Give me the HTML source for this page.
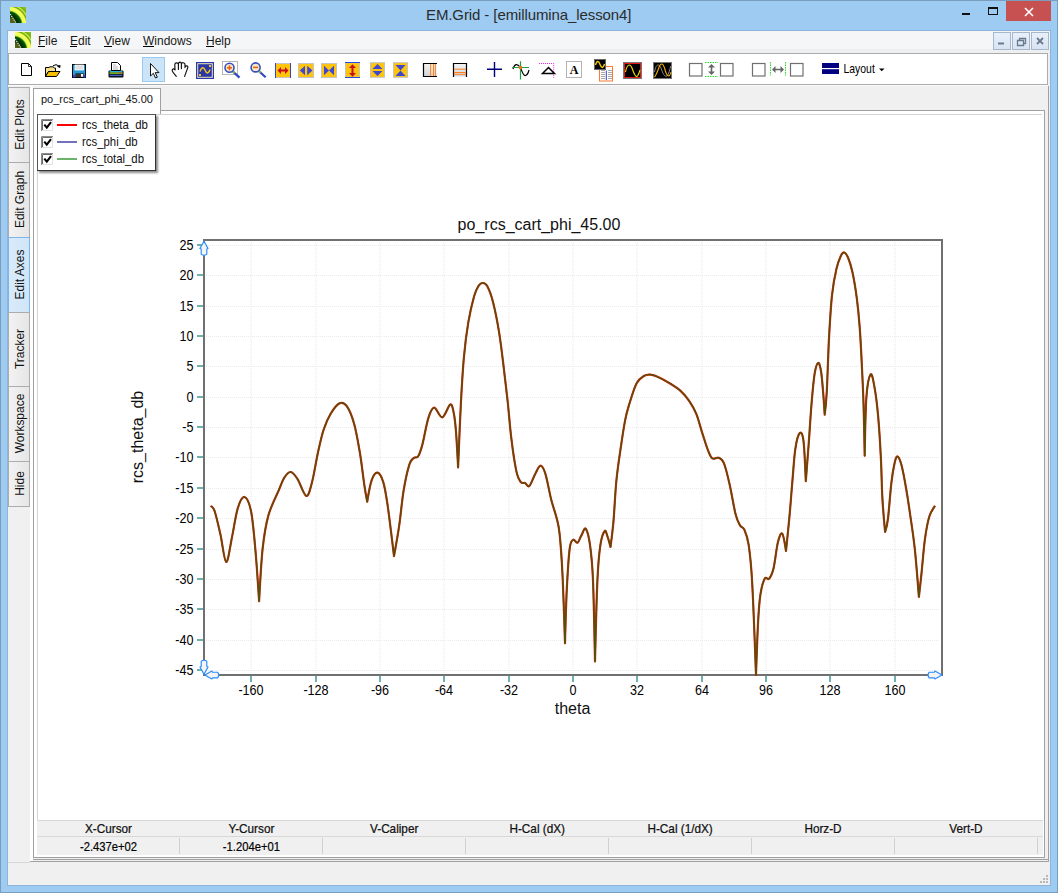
<!DOCTYPE html>
<html><head><meta charset="utf-8"><style>
*{margin:0;padding:0;box-sizing:border-box}
html,body{width:1058px;height:893px;overflow:hidden}
body{position:relative;background:#9ECBF2;font-family:"Liberation Sans",sans-serif;color:#000}
.a{position:absolute}
.t{position:absolute;white-space:nowrap;line-height:1}
u{text-decoration:none;border-bottom:1px solid #000;}
</style></head><body>
<div class="a" style="left:0;top:0;width:1058px;height:893px;border:1px solid #7A9CBD"></div>
<svg class="a" style="left:10px;top:7px" width="16" height="16" viewBox="0 0 16 16">
<defs><radialGradient id="lg1" cx="-2" cy="18" r="24" gradientUnits="userSpaceOnUse"><stop offset="0" stop-color="#6a6a28"/><stop offset="0.3" stop-color="#4a6010"/><stop offset="0.4" stop-color="#002800"/><stop offset="0.55" stop-color="#005a00"/><stop offset="0.62" stop-color="#e8ff50"/><stop offset="0.74" stop-color="#ffff60"/><stop offset="0.8" stop-color="#60a810"/><stop offset="0.86" stop-color="#d8f048"/><stop offset="0.9" stop-color="#78b010"/><stop offset="1" stop-color="#88c020"/></radialGradient></defs>
<rect width="16" height="16" fill="url(#lg1)"/>
<path d="M0.3,7 L5.8,15.8" stroke="#f0f0f0" stroke-width="1.1" stroke-dasharray="1.3,0.9"/>
</svg>
<div class="t" style="left:426px;top:7px;font-size:15px;color:#2b2b2b;letter-spacing:-0.1px">EM.Grid - [emillumina_lesson4]</div>
<div class="a" style="left:962px;top:13px;width:8px;height:2px;background:#111"></div>
<div class="a" style="left:988px;top:7px;width:10px;height:8px;border:1px solid #111;border-top-width:2px"></div>
<div class="a" style="left:1006px;top:1px;width:45px;height:20px;background:#C75050"></div>
<svg class="a" style="left:1024px;top:7px" width="10" height="10" viewBox="0 0 10 10"><path d="M1,1 L9,9 M9,1 L1,9" stroke="#fff" stroke-width="1.6"/></svg>

<div class="a" style="left:7px;top:30px;width:1044px;height:856px;border:1px solid #8DB4DA;background:#F0F0F0"></div>
<div class="a" style="left:8px;top:31px;width:1042px;height:18px;background:#F5F6F7"></div>
<div class="a" style="left:8px;top:49px;width:1042px;height:4px;background:#EEEFF1"></div>
<svg class="a" style="left:15px;top:32px" width="16" height="16" viewBox="0 0 16 16">
<defs><radialGradient id="lg2" cx="-2" cy="18" r="24" gradientUnits="userSpaceOnUse"><stop offset="0" stop-color="#6a6a28"/><stop offset="0.3" stop-color="#4a6010"/><stop offset="0.4" stop-color="#002800"/><stop offset="0.55" stop-color="#005a00"/><stop offset="0.62" stop-color="#e8ff50"/><stop offset="0.74" stop-color="#ffff60"/><stop offset="0.8" stop-color="#60a810"/><stop offset="0.86" stop-color="#d8f048"/><stop offset="0.9" stop-color="#78b010"/><stop offset="1" stop-color="#88c020"/></radialGradient></defs>
<rect width="16" height="16" fill="url(#lg2)"/>
<path d="M0.3,7 L5.8,15.8" stroke="#f0f0f0" stroke-width="1.1" stroke-dasharray="1.3,0.9"/>
</svg>
<div class="t" style="left:38px;top:35px;font-size:12px;color:#1a1a1a">File</div>
<div class="t" style="left:70px;top:35px;font-size:12px;color:#1a1a1a">Edit</div>
<div class="t" style="left:104px;top:35px;font-size:12px;color:#1a1a1a">View</div>
<div class="t" style="left:143px;top:35px;font-size:12px;color:#1a1a1a">Windows</div>
<div class="t" style="left:206px;top:35px;font-size:12px;color:#1a1a1a">Help</div>
<div class="a" style="left:38px;top:46px;width:7px;height:1px;background:#000"></div>
<div class="a" style="left:70px;top:46px;width:7px;height:1px;background:#000"></div>
<div class="a" style="left:104px;top:46px;width:8px;height:1px;background:#000"></div>
<div class="a" style="left:143px;top:46px;width:11px;height:1px;background:#000"></div>
<div class="a" style="left:206px;top:46px;width:8px;height:1px;background:#000"></div>
<div class="a" style="left:993px;top:32px;width:18px;height:18px;border:1px solid #A6B6CC;background:linear-gradient(#E8F0FA,#D8E4F2)"></div>
<div class="a" style="left:1012px;top:32px;width:18px;height:18px;border:1px solid #A6B6CC;background:linear-gradient(#E8F0FA,#D8E4F2)"></div>
<div class="a" style="left:1031px;top:32px;width:18px;height:18px;border:1px solid #A6B6CC;background:linear-gradient(#E8F0FA,#D8E4F2)"></div>
<svg class="a" style="left:990px;top:30px" width="62" height="22">
<rect x="8" y="12.5" width="6" height="2" fill="#6A7A8E"/>
<path d="M27.5,10.5 H33.5 V15.5 H27.5 Z M29.5,10.5 V8.5 H35.5 V13.5 H33.5" fill="none" stroke="#6A7A8E" stroke-width="1.3"/>
<path d="M47,8 L53,14 M53,8 L47,14" stroke="#6A7A8E" stroke-width="1.8"/>
</svg>

<div class="a" style="left:8px;top:53px;width:1040px;height:32px;border:1px solid #ABABAB;background:#fff"></div>
<div class="a" style="left:8px;top:85px;width:1040px;height:1px;background:#FAFAFA"></div>
<div class="a" style="left:142px;top:57px;width:23px;height:25px;border:1px solid #99C9EF;background:#CCE4F7"></div>
<svg class="a" style="left:0;top:0;font-family:'Liberation Sans'" width="1058" height="90"><path d="M21.5,63.5 H28.5 L31.5,66.5 V75.5 H21.5 Z" fill="#fff" stroke="#000" stroke-width="1"/><path d="M28.5,63.5 V66.5 H31.5" fill="none" stroke="#000" stroke-width="0.8"/>
<path d="M45.5,67.5 H49 L50,66.8 H53 L54.5,68 H55.5 V71.5 L48.5,71.5 L45.5,76.5 Z" fill="#F7E08A" stroke="#000" stroke-width="1"/>
<path d="M45.5,76.5 L48.5,71.5 H60 L56.5,76.5 Z" fill="#F5C000" stroke="#000" stroke-width="1"/>
<path d="M53,65.8 Q56,63.5 59,66" fill="none" stroke="#000" stroke-width="1"/><path d="M57.5,66.5 L60,67.5 L60,65" fill="#000" stroke="#000" stroke-width="0.8"/>
<rect x="72.5" y="64.5" width="13" height="13" fill="#1F9BDA" stroke="#000" stroke-width="1"/>
<rect x="75" y="65" width="8.5" height="5" fill="#E0E0E0" stroke="#fff" stroke-width="0.8"/>
<rect x="75.3" y="73.2" width="8.4" height="4" fill="#333"/><rect x="81" y="74" width="2" height="2.7" fill="#fff"/>
<rect x="73" y="75" width="2" height="2.5" fill="#4040C0"/><rect x="83.7" y="75" width="1.8" height="2.5" fill="#4040C0"/>
<path d="M111.5,62.5 H117.5 L120.5,65.5 V70.5 H111.5 Z" fill="#fff" stroke="#000" stroke-width="1"/><path d="M113,65 H116 M113,67 H118 M113,69 H118" stroke="#999" stroke-width="0.7"/>
<rect x="108.5" y="70.5" width="15" height="7" rx="1" fill="#000"/><rect x="109.5" y="71" width="13" height="1.4" fill="#20B0E0"/><rect x="109.5" y="72.4" width="13" height="1.4" fill="#9AD020"/><rect x="119" y="72.2" width="2" height="1.2" fill="#F03030"/><rect x="109.5" y="74.6" width="13" height="1.6" fill="#4060C0"/>
<path d="M150.5,63.5 L150.5,76 L153.3,73.3 L155.5,78 L157.3,77.2 L155.2,72.6 L159,72.6 Z" fill="#fff" stroke="#111" stroke-width="1" stroke-linejoin="round"/>
<path d="M176.3,76.4 C175,74.5 172.6,72.5 172.2,70.6 C172,69 173.6,67.9 175,70 L174.8,64.6 C174.8,62.4 178.4,62.2 178.4,64.6 L178.4,69.4 M178.4,64.6 C178.4,61.5 181.4,61.5 181.4,63.9 L181.4,68.6 M181.4,63.9 C181.6,62.2 185,62.2 185,64.6 L185,67.6 M185,67 C185.6,65.3 188.2,65.6 187.8,67.6 L184.6,76.4" fill="none" stroke="#111" stroke-width="1.15" stroke-linecap="round" stroke-linejoin="round"/>
<rect x="196.5" y="62.5" width="17" height="16" fill="#2B37A6" stroke="#2A3AB0" stroke-width="1"/><rect x="197.7" y="63.7" width="14.6" height="13.6" fill="none" stroke="#F2E4B0" stroke-width="1"/>
<path d="M200,71.5 C201.5,67 203.5,66.5 205,70 C206.5,74 208.5,74 210,69.5" fill="none" stroke="#F5C820" stroke-width="1.4"/><rect x="209" y="65" width="2" height="2" fill="#F5C820"/><rect x="199" y="74" width="2" height="2" fill="#F5C820"/>
<rect x="222.5" y="61.5" width="15" height="13" fill="none" stroke="#B8B8B8" stroke-width="1"/>
<path d="M233.0,71.6 L239.5,77.6" stroke="#3346C0" stroke-width="2.2"/><path d="M233.0,71.6 L234.5,73.0" stroke="#8AC040" stroke-width="2.2"/>
<circle cx="229.5" cy="67.8" r="4.5" fill="#F3EAC0" stroke="#3A4CC8" stroke-width="1.6"/>
<path d="M227.0,67.8 H232.0" stroke="#F05A10" stroke-width="1.5"/>
<path d="M229.5,65.3 V70.3" stroke="#F05A10" stroke-width="1.5"/>
<path d="M259.1,71.2 L265.6,77.2" stroke="#3346C0" stroke-width="2.2"/><path d="M259.1,71.2 L260.6,72.60000000000001" stroke="#8AC040" stroke-width="2.2"/>
<circle cx="255.6" cy="67.4" r="4.5" fill="#F3EAC0" stroke="#3A4CC8" stroke-width="1.6"/>
<path d="M253.1,67.4 H258.1" stroke="#F05A10" stroke-width="1.5"/>
<rect x="275.5" y="63.5" width="15" height="14" fill="#FFC40C" stroke="#C4C4C4" stroke-width="1"/><path d="M275.5,63 V78 M290.5,63 V78" stroke="#2F45E0" stroke-width="1"/>
<path d="M277.5,70.5 L281,67 V69.5 H285 V67 L288.5,70.5 L285,74 V71.5 H281 V74 Z" fill="#C8101E"/>
<rect x="298.5" y="63.5" width="15" height="14" fill="#FFC40C" stroke="#C4C4C4" stroke-width="1"/><path d="M299.8,70.5 L305,65.7 V75.3 Z M312.5,70.5 L307.2,65.7 V75.3 Z" fill="#3F48D0"/>
<rect x="321.5" y="63.5" width="15" height="14" fill="#FFC40C" stroke="#C4C4C4" stroke-width="1"/><path d="M324,65.7 L329,70.5 L324,75.3 Z M334,65.7 L329,70.5 L334,75.3 Z" fill="#3F48D0"/>
<rect x="345.5" y="62.7" width="14" height="14.6" fill="#FFC40C" stroke="#C4C4C4" stroke-width="1"/><path d="M345,62.5 H360 M345,77.5 H360" stroke="#2F45E0" stroke-width="1"/>
<path d="M352.5,64.2 L356,68 H353.5 V73 H356 L352.5,76.8 L349,73 H351.5 V68 H349 Z" fill="#C8101E"/>
<rect x="370.5" y="62.7" width="14" height="14.6" fill="#FFC40C" stroke="#C4C4C4" stroke-width="1"/><path d="M377.5,64 L382.5,69 H372.5 Z M377.5,76 L382.5,71 H372.5 Z" fill="#3F48D0"/>
<rect x="393.5" y="62.7" width="14" height="14.6" fill="#FFC40C" stroke="#C4C4C4" stroke-width="1"/><path d="M395.5,65 H405.5 L400.5,70.5 Z M395.5,76 H405.5 L400.5,70.5 Z" fill="#3F48D0"/>
<defs><linearGradient id="gg" x1="0" y1="0" x2="0" y2="1"><stop offset="0" stop-color="#F4F4F4"/><stop offset="1" stop-color="#D4D4D4"/></linearGradient></defs>
<rect x="423.5" y="63.5" width="13" height="13" fill="url(#gg)"/><path d="M437,63.5 H423.5 V76.5 H437" fill="none" stroke="#000" stroke-width="1.2"/><path d="M430.6,64 V76 M433.5,64 V76 M435.4,64 V76" stroke="#FF8020" stroke-width="1"/>
<rect x="453.5" y="63.5" width="13" height="13" fill="url(#gg)"/><path d="M453.5,77 V63.5 H466.5 V77" fill="none" stroke="#000" stroke-width="1.2"/><path d="M454,69.2 H466 M454,72.5 H466 M454,74.3 H466" stroke="#FF8020" stroke-width="1"/>
<path d="M494.5,62 V77 M487,69.3 H502" stroke="#00007A" stroke-width="1.4"/>
<path d="M513,69 C514.5,64 517,63 520.5,67.5 C522,72 523.5,76 525.5,75.5 C527.5,75 528.5,72 529,70" fill="none" stroke="#000" stroke-width="1.2"/>
<path d="M520.5,61.3 V79.6 M512.2,67.5 H529" stroke="#20A040" stroke-width="1.2"/><rect x="519" y="66" width="3" height="3" fill="#F07020"/>
<path d="M539,63.5 H553.7 V78" fill="none" stroke="#F020F0" stroke-width="1" stroke-dasharray="1,1"/>
<path d="M542.5,73.5 H554.5 L548.5,67.5 Z" fill="none" stroke="#000" stroke-width="1.5"/>
<rect x="566.5" y="61.5" width="15" height="16" fill="#fff" stroke="#B4B4B4" stroke-width="1"/>
<text x="574" y="74" text-anchor="middle" font-family="Liberation Serif" font-weight="bold" font-size="12">A</text>
<rect x="599.5" y="66.5" width="13" height="14.5" fill="#fff" stroke="#FF7A30" stroke-width="1"/>
<path d="M601,70.5 H605 M601,72.5 H605 M601,74.5 H605 M601,76.5 H605 M601,78.5 H605 M608,70.5 H612 M608,72.5 H612 M608,74.5 H612 M608,76.5 H612 M608,78.5 H612" stroke="#A8A8A8" stroke-width="1"/><path d="M606.3,70.5 V80" stroke="#3040D0" stroke-width="1"/>
<rect x="594.5" y="59.5" width="11" height="10" fill="#000" stroke="#666" stroke-width="1"/>
<path d="M595.5,65 C597,60.5 598.5,60.5 600,64.5 C601.5,68.5 603,68.5 604.5,64" fill="none" stroke="#F5D000" stroke-width="1.4"/>
<rect x="623.5" y="62.5" width="18" height="16" fill="#000" stroke="#777" stroke-width="1"/><rect x="624.5" y="63.5" width="16" height="14" fill="none" stroke="#E01818" stroke-width="1"/>
<path d="M625.5,72 C627,64 630,63 632,68 C634,74 636,78 637.5,76 C639,74 639.5,72 640,70" fill="none" stroke="#F0E000" stroke-width="1.1"/>
<rect x="653.5" y="62.5" width="18" height="16" fill="#000" stroke="#777" stroke-width="1"/>
<path d="M654.5,72 C656,64 658.5,63 661,68 C663,74 664.5,77 667,76 C669,74.5 670,68 670.8,66" fill="none" stroke="#888" stroke-width="1"/>
<path d="M654.5,77 C656.5,75 658,70 659.5,66 C661,63 663,63 664.5,68 C666,74 667.5,77 669.5,75.5 C670.5,74 670.8,73 671,72" fill="none" stroke="#F0B000" stroke-width="1.1"/>
<rect x="689.5" y="63.5" width="12.5" height="12.5" fill="#fff" stroke="#707070" stroke-width="1.2"/>
<rect x="720.5" y="63.5" width="12.5" height="12.5" fill="#fff" stroke="#707070" stroke-width="1.2"/>
<rect x="752.5" y="63.5" width="12.5" height="12.5" fill="#fff" stroke="#707070" stroke-width="1.2"/>
<rect x="790.5" y="63.5" width="12.5" height="12.5" fill="#fff" stroke="#707070" stroke-width="1.2"/>
<path d="M705,62.5 H718 M705,76.5 H718" stroke="#20E020" stroke-width="1" stroke-dasharray="1.5,1"/>
<path d="M711.5,64 L715,67.5 H712.3 V71.5 H715 L711.5,75 L708,71.5 H710.7 V67.5 H708 Z" fill="#666"/>
<path d="M770.5,62 V75.5 M785.5,62 V75.5" stroke="#20E020" stroke-width="1" stroke-dasharray="1.5,1"/>
<path d="M772,69.5 L775.5,66 V68.7 H780.5 V66 L784,69.5 L780.5,73 V70.3 H775.5 V73 Z" fill="#666"/>
<rect x="822" y="63" width="17" height="11" fill="#000080"/><rect x="822" y="68" width="17" height="1.2" fill="#fff"/>
<text transform="translate(843.5,73.3) scale(0.87,1)" font-size="12" fill="#000">Layout</text>
<path d="M879,68.5 H884.5 L881.75,71.3 Z" fill="#000"/></svg>

<div class="a" style="left:8px;top:87px;width:22px;height:76px;border:1px solid #ACACAC;background:linear-gradient(to right,#F2F2F2,#E6E6E6)"></div>
<div class="a" style="left:8px;top:162px;width:22px;height:76px;border:1px solid #ACACAC;background:linear-gradient(to right,#F2F2F2,#E6E6E6)"></div>
<div class="a" style="left:8px;top:237px;width:22px;height:76px;border:1px solid #7EB4EA;background:linear-gradient(to right,#D9EBFA,#CFE5F8)"></div>
<div class="a" style="left:8px;top:312px;width:22px;height:75px;border:1px solid #ACACAC;background:linear-gradient(to right,#F2F2F2,#E6E6E6)"></div>
<div class="a" style="left:8px;top:386px;width:22px;height:76px;border:1px solid #ACACAC;background:linear-gradient(to right,#F2F2F2,#E6E6E6)"></div>
<div class="a" style="left:8px;top:461px;width:22px;height:46px;border:1px solid #ACACAC;background:linear-gradient(to right,#F2F2F2,#E6E6E6)"></div><svg class="a" style="left:0;top:0;font-family:'Liberation Sans'" width="40" height="520">
<text transform="translate(24.3,124.5) rotate(-90) scale(0.92,1)" text-anchor="middle" font-size="13" fill="#111">Edit Plots</text>
<text transform="translate(24.3,199.5) rotate(-90) scale(0.92,1)" text-anchor="middle" font-size="13" fill="#111">Edit Graph</text>
<text transform="translate(24.3,274.5) rotate(-90) scale(0.92,1)" text-anchor="middle" font-size="13" fill="#111">Edit Axes</text>
<text transform="translate(24.3,349.0) rotate(-90) scale(0.92,1)" text-anchor="middle" font-size="13" fill="#111">Tracker</text>
<text transform="translate(24.3,423.5) rotate(-90) scale(0.92,1)" text-anchor="middle" font-size="13" fill="#111">Workspace</text>
<text transform="translate(24.3,483.5) rotate(-90) scale(0.92,1)" text-anchor="middle" font-size="13" fill="#111">Hide</text>
</svg>

<div class="a" style="left:1048px;top:86px;width:1px;height:776px;background:#A0A0A0"></div>
<div class="a" style="left:30px;top:861px;width:1019px;height:1px;background:#A0A0A0"></div>
<div class="a" style="left:31px;top:859px;width:1017px;height:1px;background:#A0A0A0"></div>
<div class="a" style="left:8px;top:862px;width:22px;height:1px;background:#D8D8D8"></div>
<div class="a" style="left:30px;top:86px;width:3px;height:775px;background:#fff"></div>
<div class="a" style="left:33px;top:110px;width:1012px;height:748px;border:1px solid #A0A0A0;background:#fff"></div>
<div class="a" style="left:37px;top:114px;width:1005px;height:706px;border:1px solid #D4D4D4;border-right:none;border-bottom:none;background:#fff"></div>
<div class="a" style="left:161px;top:86px;width:887px;height:24px;background:#F0F0F0"></div>
<div class="a" style="left:33px;top:88px;width:128px;height:26px;border:1px solid #A0A0A0;border-bottom:none;background:#fff"></div>
<div class="t" style="left:41px;top:94px;font-size:11px;color:#111">po_rcs_cart_phi_45.00</div>

<svg class="a" style="left:0;top:0;font-family:'Liberation Sans'" width="1058" height="893" viewBox="0 0 1058 893"><line x1="251" y1="242" x2="251" y2="673" stroke="#EAEAEA" stroke-width="1.1" stroke-dasharray="1,1"/>
<line x1="316" y1="242" x2="316" y2="673" stroke="#EAEAEA" stroke-width="1.1" stroke-dasharray="1,1"/>
<line x1="380" y1="242" x2="380" y2="673" stroke="#EAEAEA" stroke-width="1.1" stroke-dasharray="1,1"/>
<line x1="444" y1="242" x2="444" y2="673" stroke="#EAEAEA" stroke-width="1.1" stroke-dasharray="1,1"/>
<line x1="509" y1="242" x2="509" y2="673" stroke="#EAEAEA" stroke-width="1.1" stroke-dasharray="1,1"/>
<line x1="573" y1="242" x2="573" y2="673" stroke="#EAEAEA" stroke-width="1.1" stroke-dasharray="1,1"/>
<line x1="637" y1="242" x2="637" y2="673" stroke="#EAEAEA" stroke-width="1.1" stroke-dasharray="1,1"/>
<line x1="702" y1="242" x2="702" y2="673" stroke="#EAEAEA" stroke-width="1.1" stroke-dasharray="1,1"/>
<line x1="766" y1="242" x2="766" y2="673" stroke="#EAEAEA" stroke-width="1.1" stroke-dasharray="1,1"/>
<line x1="830" y1="242" x2="830" y2="673" stroke="#EAEAEA" stroke-width="1.1" stroke-dasharray="1,1"/>
<line x1="895" y1="242" x2="895" y2="673" stroke="#EAEAEA" stroke-width="1.1" stroke-dasharray="1,1"/>
<line x1="206" y1="245.5" x2="940" y2="245.5" stroke="#EAEAEA" stroke-width="1.1" stroke-dasharray="1,1"/>
<line x1="206" y1="275.5" x2="940" y2="275.5" stroke="#EAEAEA" stroke-width="1.1" stroke-dasharray="1,1"/>
<line x1="206" y1="306.5" x2="940" y2="306.5" stroke="#EAEAEA" stroke-width="1.1" stroke-dasharray="1,1"/>
<line x1="206" y1="336.5" x2="940" y2="336.5" stroke="#EAEAEA" stroke-width="1.1" stroke-dasharray="1,1"/>
<line x1="206" y1="366.5" x2="940" y2="366.5" stroke="#EAEAEA" stroke-width="1.1" stroke-dasharray="1,1"/>
<line x1="206" y1="397.5" x2="940" y2="397.5" stroke="#EAEAEA" stroke-width="1.1" stroke-dasharray="1,1"/>
<line x1="206" y1="427.5" x2="940" y2="427.5" stroke="#EAEAEA" stroke-width="1.1" stroke-dasharray="1,1"/>
<line x1="206" y1="457.5" x2="940" y2="457.5" stroke="#EAEAEA" stroke-width="1.1" stroke-dasharray="1,1"/>
<line x1="206" y1="488.5" x2="940" y2="488.5" stroke="#EAEAEA" stroke-width="1.1" stroke-dasharray="1,1"/>
<line x1="206" y1="518.5" x2="940" y2="518.5" stroke="#EAEAEA" stroke-width="1.1" stroke-dasharray="1,1"/>
<line x1="206" y1="549.5" x2="940" y2="549.5" stroke="#EAEAEA" stroke-width="1.1" stroke-dasharray="1,1"/>
<line x1="206" y1="579.5" x2="940" y2="579.5" stroke="#EAEAEA" stroke-width="1.1" stroke-dasharray="1,1"/>
<line x1="206" y1="609.5" x2="940" y2="609.5" stroke="#EAEAEA" stroke-width="1.1" stroke-dasharray="1,1"/>
<line x1="206" y1="640.5" x2="940" y2="640.5" stroke="#EAEAEA" stroke-width="1.1" stroke-dasharray="1,1"/>
<line x1="206" y1="670.5" x2="940" y2="670.5" stroke="#EAEAEA" stroke-width="1.1" stroke-dasharray="1,1"/>
<rect x="197" y="244" width="6" height="2" fill="#6FB0AC"/>
<text transform="translate(193.5,250) scale(0.9,1)" text-anchor="end" font-size="14">25</text>
<rect x="197" y="274" width="6" height="2" fill="#6FB0AC"/>
<text transform="translate(193.5,280) scale(0.9,1)" text-anchor="end" font-size="14">20</text>
<rect x="197" y="305" width="6" height="2" fill="#6FB0AC"/>
<text transform="translate(193.5,311) scale(0.9,1)" text-anchor="end" font-size="14">15</text>
<rect x="197" y="335" width="6" height="2" fill="#6FB0AC"/>
<text transform="translate(193.5,341) scale(0.9,1)" text-anchor="end" font-size="14">10</text>
<rect x="197" y="365" width="6" height="2" fill="#6FB0AC"/>
<text transform="translate(193.5,371) scale(0.9,1)" text-anchor="end" font-size="14">5</text>
<rect x="197" y="396" width="6" height="2" fill="#6FB0AC"/>
<text transform="translate(193.5,402) scale(0.9,1)" text-anchor="end" font-size="14">0</text>
<rect x="197" y="426" width="6" height="2" fill="#6FB0AC"/>
<text transform="translate(193.5,432) scale(0.9,1)" text-anchor="end" font-size="14">-5</text>
<rect x="197" y="456" width="6" height="2" fill="#6FB0AC"/>
<text transform="translate(193.5,462) scale(0.9,1)" text-anchor="end" font-size="14">-10</text>
<rect x="197" y="487" width="6" height="2" fill="#6FB0AC"/>
<text transform="translate(193.5,493) scale(0.9,1)" text-anchor="end" font-size="14">-15</text>
<rect x="197" y="517" width="6" height="2" fill="#6FB0AC"/>
<text transform="translate(193.5,523) scale(0.9,1)" text-anchor="end" font-size="14">-20</text>
<rect x="197" y="548" width="6" height="2" fill="#6FB0AC"/>
<text transform="translate(193.5,554) scale(0.9,1)" text-anchor="end" font-size="14">-25</text>
<rect x="197" y="578" width="6" height="2" fill="#6FB0AC"/>
<text transform="translate(193.5,584) scale(0.9,1)" text-anchor="end" font-size="14">-30</text>
<rect x="197" y="608" width="6" height="2" fill="#6FB0AC"/>
<text transform="translate(193.5,614) scale(0.9,1)" text-anchor="end" font-size="14">-35</text>
<rect x="197" y="639" width="6" height="2" fill="#6FB0AC"/>
<text transform="translate(193.5,645) scale(0.9,1)" text-anchor="end" font-size="14">-40</text>
<rect x="197" y="669" width="6" height="2" fill="#6FB0AC"/>
<text transform="translate(193.5,675) scale(0.9,1)" text-anchor="end" font-size="14">-45</text>
<rect x="250" y="676" width="2" height="6" fill="#6FB0AC"/>
<text transform="translate(251,695) scale(0.9,1)" text-anchor="middle" font-size="14">-160</text>
<rect x="315" y="676" width="2" height="6" fill="#6FB0AC"/>
<text transform="translate(316,695) scale(0.9,1)" text-anchor="middle" font-size="14">-128</text>
<rect x="379" y="676" width="2" height="6" fill="#6FB0AC"/>
<text transform="translate(380,695) scale(0.9,1)" text-anchor="middle" font-size="14">-96</text>
<rect x="443" y="676" width="2" height="6" fill="#6FB0AC"/>
<text transform="translate(444,695) scale(0.9,1)" text-anchor="middle" font-size="14">-64</text>
<rect x="508" y="676" width="2" height="6" fill="#6FB0AC"/>
<text transform="translate(509,695) scale(0.9,1)" text-anchor="middle" font-size="14">-32</text>
<rect x="572" y="676" width="2" height="6" fill="#6FB0AC"/>
<text transform="translate(573,695) scale(0.9,1)" text-anchor="middle" font-size="14">0</text>
<rect x="636" y="676" width="2" height="6" fill="#6FB0AC"/>
<text transform="translate(637,695) scale(0.9,1)" text-anchor="middle" font-size="14">32</text>
<rect x="701" y="676" width="2" height="6" fill="#6FB0AC"/>
<text transform="translate(702,695) scale(0.9,1)" text-anchor="middle" font-size="14">64</text>
<rect x="765" y="676" width="2" height="6" fill="#6FB0AC"/>
<text transform="translate(766,695) scale(0.9,1)" text-anchor="middle" font-size="14">96</text>
<rect x="829" y="676" width="2" height="6" fill="#6FB0AC"/>
<text transform="translate(830,695) scale(0.9,1)" text-anchor="middle" font-size="14">128</text>
<rect x="894" y="676" width="2" height="6" fill="#6FB0AC"/>
<text transform="translate(895,695) scale(0.9,1)" text-anchor="middle" font-size="14">160</text>
<rect x="204" y="240" width="738" height="435" fill="none" stroke="#707070" stroke-width="2"/>
<path d="M210.8,505.8 C211.4,506.7 213.0,506.2 214.6,511.0 C216.2,515.8 218.5,525.8 220.4,534.3 C222.3,542.8 224.3,561.5 226.2,562.0 C228.1,562.5 230.1,546.2 232.0,537.2 C233.9,528.2 235.7,514.8 237.8,508.1 C239.9,501.4 242.3,496.5 244.5,497.0 C246.7,497.5 249.2,502.4 251.0,511.0 C252.8,519.6 254.0,533.9 255.3,548.9 C256.7,563.9 259.1,601.3 259.1,601.3 C259.1,601.3 261.1,563.2 262.6,548.9 C264.2,534.6 265.7,525.1 268.4,515.4 C271.1,505.7 275.9,496.9 278.6,490.6 C281.3,484.3 282.4,480.6 284.4,477.5 C286.4,474.4 288.6,471.8 290.8,472.0 C293.0,472.2 294.9,475.0 297.5,479.0 C300.1,483.0 303.9,495.4 306.3,495.9 C308.7,496.4 310.2,489.1 312.1,481.9 C314.0,474.7 316.0,461.5 317.9,452.8 C319.8,444.1 321.5,436.1 323.7,429.5 C325.9,422.9 328.1,417.9 330.8,413.5 C333.5,409.1 336.9,404.5 339.6,403.3 C342.3,402.1 344.4,402.8 346.8,406.2 C349.2,409.6 351.9,415.9 354.1,423.7 C356.3,431.5 358.2,442.6 359.9,452.8 C361.6,463.0 363.1,476.7 364.3,484.8 C365.5,492.9 367.2,501.7 367.2,501.7 C367.2,501.7 369.9,485.2 371.6,480.4 C373.3,475.5 375.5,472.4 377.4,472.6 C379.3,472.9 381.5,476.5 383.2,481.9 C384.9,487.3 385.8,492.8 387.6,505.2 C389.4,517.6 394.0,556.1 394.0,556.1 C394.0,556.1 397.6,536.5 399.2,525.6 C400.8,514.7 401.9,500.8 403.6,490.6 C405.3,480.4 407.7,469.8 409.4,464.4 C411.1,459.0 412.3,459.4 413.8,458.0 C415.3,456.6 416.8,458.6 418.2,456.3 C419.6,454.0 420.8,450.5 422.5,444.1 C424.2,437.7 426.4,424.0 428.4,417.9 C430.3,411.8 431.9,407.8 434.2,407.7 C436.5,407.6 439.6,417.8 442.3,417.3 C445.0,416.8 448.3,405.3 450.2,404.5 C452.1,403.7 452.7,407.9 453.7,412.7 C454.7,417.4 455.4,423.9 456.1,433.0 C456.8,442.1 458.1,467.4 458.1,467.4 C458.1,467.4 460.0,419.4 461.0,401.0 C462.0,382.6 462.7,370.4 463.9,357.3 C465.1,344.2 466.6,332.6 468.3,322.4 C470.0,312.2 472.4,302.3 474.1,296.2 C475.8,290.1 477.1,288.2 478.5,286.0 C479.9,283.8 481.1,283.0 482.5,283.0 C483.9,283.0 485.4,282.8 487.2,286.0 C488.9,289.2 491.1,294.5 493.0,302.0 C494.9,309.5 497.2,320.9 498.9,331.1 C500.6,341.3 501.8,351.6 503.2,363.2 C504.6,374.8 506.2,388.4 507.6,401.0 C509.0,413.6 509.9,427.2 511.4,438.9 C512.8,450.5 514.8,463.7 516.3,470.9 C517.8,478.1 519.2,480.0 520.7,482.0 C522.2,484.0 523.7,482.4 525.1,483.1 C526.5,483.8 527.7,487.6 529.4,486.0 C531.1,484.4 533.4,477.2 535.3,473.8 C537.1,470.4 538.8,465.7 540.5,465.7 C542.2,465.7 543.6,468.1 545.4,473.8 C547.2,479.5 549.4,492.6 551.3,500.0 C553.2,507.4 555.2,512.2 556.6,517.9 C558.0,523.5 558.6,524.4 559.6,533.9 C560.6,543.4 561.6,556.5 562.5,574.7 C563.4,592.9 565.0,643.3 565.0,643.3 C565.0,643.3 566.0,605.1 566.8,589.3 C567.6,573.5 568.6,556.8 569.7,548.5 C570.8,540.2 571.9,540.8 573.2,539.8 C574.5,538.8 576.2,543.4 577.6,542.7 C579.0,542.0 580.0,537.7 581.4,535.4 C582.8,533.1 584.3,527.0 585.8,528.7 C587.2,530.4 588.9,537.0 590.1,545.6 C591.3,554.2 592.2,561.2 593.0,580.5 C593.8,599.8 595.0,661.5 595.0,661.5 C595.0,661.5 596.5,599.8 597.4,580.5 C598.3,561.2 599.1,553.9 600.3,545.6 C601.5,537.4 603.5,532.5 604.7,531.0 C605.9,529.5 606.6,534.1 607.6,536.8 C608.6,539.5 610.5,547.0 610.5,547.0 C610.5,547.0 612.4,533.2 613.4,522.3 C614.4,511.4 615.1,493.9 616.3,481.5 C617.5,469.1 619.2,458.2 620.7,448.0 C622.2,437.8 623.7,427.8 625.1,420.4 C626.5,413.0 627.5,409.9 629.4,403.7 C631.3,397.5 634.2,387.9 636.6,383.3 C639.0,378.7 641.7,377.4 643.9,376.0 C646.1,374.6 647.5,374.5 649.7,374.6 C651.9,374.7 653.8,375.2 657.0,376.6 C660.2,378.0 664.8,380.4 668.7,382.7 C672.6,385.0 676.9,387.6 680.3,390.6 C683.7,393.6 686.4,396.9 689.1,400.8 C691.8,404.7 694.1,408.6 696.3,413.9 C698.5,419.2 700.2,426.7 702.2,432.8 C704.2,438.9 706.3,446.0 708.0,450.3 C709.7,454.6 710.5,457.1 712.3,458.4 C714.1,459.6 716.8,457.0 718.8,457.8 C720.8,458.6 722.2,458.8 724.0,463.4 C725.8,468.0 727.9,476.7 729.8,485.2 C731.7,493.7 733.9,507.6 735.6,514.3 C737.3,521.0 738.5,522.8 740.0,525.4 C741.5,528.0 742.9,526.5 744.4,529.8 C745.9,533.1 747.4,536.3 748.7,545.2 C750.0,554.1 751.0,561.4 752.2,583.0 C753.4,604.6 756.0,674.8 756.0,674.8 C756.0,674.8 757.3,637.1 758.0,623.8 C758.7,610.4 759.3,602.2 760.4,594.7 C761.5,587.2 763.2,581.4 764.7,578.7 C766.2,576.0 767.6,580.4 769.1,578.7 C770.6,577.0 772.0,574.6 773.5,568.5 C775.0,562.4 776.4,548.1 777.9,542.3 C779.4,536.5 780.9,532.1 782.2,533.6 C783.6,535.1 786.0,551.0 786.0,551.0 C786.0,551.0 788.4,527.8 789.5,516.1 C790.6,504.5 791.4,492.3 792.4,481.1 C793.4,469.9 794.1,457.1 795.3,449.1 C796.5,441.1 798.3,434.5 799.7,433.1 C801.1,431.8 802.5,433.0 803.5,441.0 C804.5,449.0 805.8,481.1 805.8,481.1 C805.8,481.1 807.7,456.8 808.7,443.8 C809.7,430.8 810.6,414.6 811.6,403.0 C812.6,391.4 813.5,380.6 814.6,373.9 C815.7,367.2 817.0,363.4 818.1,362.9 C819.2,362.4 820.1,365.8 821.0,371.0 C821.9,376.2 822.7,387.0 823.3,394.3 C823.9,401.6 824.7,414.7 824.7,414.7 C824.7,414.7 826.1,404.5 826.8,391.4 C827.5,378.3 828.2,352.1 829.1,336.1 C830.0,320.1 830.8,306.5 832.0,295.3 C833.2,284.1 834.9,275.7 836.4,269.1 C837.9,262.6 839.5,258.8 840.8,256.0 C842.1,253.2 843.1,252.2 844.3,252.5 C845.5,252.8 846.6,254.2 848.0,257.5 C849.4,260.8 850.9,265.2 852.4,272.0 C853.9,278.8 855.6,289.0 856.8,298.2 C858.0,307.4 858.9,316.6 859.7,327.3 C860.5,338.0 861.1,349.7 861.7,362.3 C862.3,374.9 863.0,387.4 863.5,403.0 C864.0,418.6 864.7,455.7 864.7,455.7 C864.7,455.7 865.4,410.7 866.4,397.2 C867.4,383.7 869.2,376.4 870.5,374.5 C871.8,372.6 873.0,378.9 874.2,385.6 C875.5,392.3 876.9,402.6 878.0,414.7 C879.1,426.8 880.2,444.4 880.9,458.4 C881.6,472.3 881.7,486.1 882.4,498.4 C883.1,510.7 885.1,532.0 885.1,532.0 C885.1,532.0 887.0,526.7 888.0,518.5 C889.0,510.3 890.3,492.0 891.4,482.7 C892.5,473.4 893.7,467.0 894.7,462.6 C895.7,458.2 896.5,456.1 897.6,456.5 C898.7,456.9 900.0,459.7 901.4,464.8 C902.8,469.9 904.4,478.6 905.9,487.2 C907.4,495.8 908.9,505.8 910.4,516.3 C911.9,526.8 913.5,536.5 914.9,549.9 C916.3,563.3 918.9,596.9 918.9,596.9 C918.9,596.9 920.6,582.0 921.6,572.3 C922.6,562.6 923.7,548.0 925.0,538.7 C926.3,529.4 927.7,521.8 929.4,516.3 C931.1,510.8 934.1,507.6 935.0,505.8" fill="none" stroke="#F01000" stroke-width="2.2" opacity="0.9" stroke-linejoin="round"/>
<path d="M210.8,505.8 C211.4,506.7 213.0,506.2 214.6,511.0 C216.2,515.8 218.5,525.8 220.4,534.3 C222.3,542.8 224.3,561.5 226.2,562.0 C228.1,562.5 230.1,546.2 232.0,537.2 C233.9,528.2 235.7,514.8 237.8,508.1 C239.9,501.4 242.3,496.5 244.5,497.0 C246.7,497.5 249.2,502.4 251.0,511.0 C252.8,519.6 254.0,533.9 255.3,548.9 C256.7,563.9 259.1,601.3 259.1,601.3 C259.1,601.3 261.1,563.2 262.6,548.9 C264.2,534.6 265.7,525.1 268.4,515.4 C271.1,505.7 275.9,496.9 278.6,490.6 C281.3,484.3 282.4,480.6 284.4,477.5 C286.4,474.4 288.6,471.8 290.8,472.0 C293.0,472.2 294.9,475.0 297.5,479.0 C300.1,483.0 303.9,495.4 306.3,495.9 C308.7,496.4 310.2,489.1 312.1,481.9 C314.0,474.7 316.0,461.5 317.9,452.8 C319.8,444.1 321.5,436.1 323.7,429.5 C325.9,422.9 328.1,417.9 330.8,413.5 C333.5,409.1 336.9,404.5 339.6,403.3 C342.3,402.1 344.4,402.8 346.8,406.2 C349.2,409.6 351.9,415.9 354.1,423.7 C356.3,431.5 358.2,442.6 359.9,452.8 C361.6,463.0 363.1,476.7 364.3,484.8 C365.5,492.9 367.2,501.7 367.2,501.7 C367.2,501.7 369.9,485.2 371.6,480.4 C373.3,475.5 375.5,472.4 377.4,472.6 C379.3,472.9 381.5,476.5 383.2,481.9 C384.9,487.3 385.8,492.8 387.6,505.2 C389.4,517.6 394.0,556.1 394.0,556.1 C394.0,556.1 397.6,536.5 399.2,525.6 C400.8,514.7 401.9,500.8 403.6,490.6 C405.3,480.4 407.7,469.8 409.4,464.4 C411.1,459.0 412.3,459.4 413.8,458.0 C415.3,456.6 416.8,458.6 418.2,456.3 C419.6,454.0 420.8,450.5 422.5,444.1 C424.2,437.7 426.4,424.0 428.4,417.9 C430.3,411.8 431.9,407.8 434.2,407.7 C436.5,407.6 439.6,417.8 442.3,417.3 C445.0,416.8 448.3,405.3 450.2,404.5 C452.1,403.7 452.7,407.9 453.7,412.7 C454.7,417.4 455.4,423.9 456.1,433.0 C456.8,442.1 458.1,467.4 458.1,467.4 C458.1,467.4 460.0,419.4 461.0,401.0 C462.0,382.6 462.7,370.4 463.9,357.3 C465.1,344.2 466.6,332.6 468.3,322.4 C470.0,312.2 472.4,302.3 474.1,296.2 C475.8,290.1 477.1,288.2 478.5,286.0 C479.9,283.8 481.1,283.0 482.5,283.0 C483.9,283.0 485.4,282.8 487.2,286.0 C488.9,289.2 491.1,294.5 493.0,302.0 C494.9,309.5 497.2,320.9 498.9,331.1 C500.6,341.3 501.8,351.6 503.2,363.2 C504.6,374.8 506.2,388.4 507.6,401.0 C509.0,413.6 509.9,427.2 511.4,438.9 C512.8,450.5 514.8,463.7 516.3,470.9 C517.8,478.1 519.2,480.0 520.7,482.0 C522.2,484.0 523.7,482.4 525.1,483.1 C526.5,483.8 527.7,487.6 529.4,486.0 C531.1,484.4 533.4,477.2 535.3,473.8 C537.1,470.4 538.8,465.7 540.5,465.7 C542.2,465.7 543.6,468.1 545.4,473.8 C547.2,479.5 549.4,492.6 551.3,500.0 C553.2,507.4 555.2,512.2 556.6,517.9 C558.0,523.5 558.6,524.4 559.6,533.9 C560.6,543.4 561.6,556.5 562.5,574.7 C563.4,592.9 565.0,643.3 565.0,643.3 C565.0,643.3 566.0,605.1 566.8,589.3 C567.6,573.5 568.6,556.8 569.7,548.5 C570.8,540.2 571.9,540.8 573.2,539.8 C574.5,538.8 576.2,543.4 577.6,542.7 C579.0,542.0 580.0,537.7 581.4,535.4 C582.8,533.1 584.3,527.0 585.8,528.7 C587.2,530.4 588.9,537.0 590.1,545.6 C591.3,554.2 592.2,561.2 593.0,580.5 C593.8,599.8 595.0,661.5 595.0,661.5 C595.0,661.5 596.5,599.8 597.4,580.5 C598.3,561.2 599.1,553.9 600.3,545.6 C601.5,537.4 603.5,532.5 604.7,531.0 C605.9,529.5 606.6,534.1 607.6,536.8 C608.6,539.5 610.5,547.0 610.5,547.0 C610.5,547.0 612.4,533.2 613.4,522.3 C614.4,511.4 615.1,493.9 616.3,481.5 C617.5,469.1 619.2,458.2 620.7,448.0 C622.2,437.8 623.7,427.8 625.1,420.4 C626.5,413.0 627.5,409.9 629.4,403.7 C631.3,397.5 634.2,387.9 636.6,383.3 C639.0,378.7 641.7,377.4 643.9,376.0 C646.1,374.6 647.5,374.5 649.7,374.6 C651.9,374.7 653.8,375.2 657.0,376.6 C660.2,378.0 664.8,380.4 668.7,382.7 C672.6,385.0 676.9,387.6 680.3,390.6 C683.7,393.6 686.4,396.9 689.1,400.8 C691.8,404.7 694.1,408.6 696.3,413.9 C698.5,419.2 700.2,426.7 702.2,432.8 C704.2,438.9 706.3,446.0 708.0,450.3 C709.7,454.6 710.5,457.1 712.3,458.4 C714.1,459.6 716.8,457.0 718.8,457.8 C720.8,458.6 722.2,458.8 724.0,463.4 C725.8,468.0 727.9,476.7 729.8,485.2 C731.7,493.7 733.9,507.6 735.6,514.3 C737.3,521.0 738.5,522.8 740.0,525.4 C741.5,528.0 742.9,526.5 744.4,529.8 C745.9,533.1 747.4,536.3 748.7,545.2 C750.0,554.1 751.0,561.4 752.2,583.0 C753.4,604.6 756.0,674.8 756.0,674.8 C756.0,674.8 757.3,637.1 758.0,623.8 C758.7,610.4 759.3,602.2 760.4,594.7 C761.5,587.2 763.2,581.4 764.7,578.7 C766.2,576.0 767.6,580.4 769.1,578.7 C770.6,577.0 772.0,574.6 773.5,568.5 C775.0,562.4 776.4,548.1 777.9,542.3 C779.4,536.5 780.9,532.1 782.2,533.6 C783.6,535.1 786.0,551.0 786.0,551.0 C786.0,551.0 788.4,527.8 789.5,516.1 C790.6,504.5 791.4,492.3 792.4,481.1 C793.4,469.9 794.1,457.1 795.3,449.1 C796.5,441.1 798.3,434.5 799.7,433.1 C801.1,431.8 802.5,433.0 803.5,441.0 C804.5,449.0 805.8,481.1 805.8,481.1 C805.8,481.1 807.7,456.8 808.7,443.8 C809.7,430.8 810.6,414.6 811.6,403.0 C812.6,391.4 813.5,380.6 814.6,373.9 C815.7,367.2 817.0,363.4 818.1,362.9 C819.2,362.4 820.1,365.8 821.0,371.0 C821.9,376.2 822.7,387.0 823.3,394.3 C823.9,401.6 824.7,414.7 824.7,414.7 C824.7,414.7 826.1,404.5 826.8,391.4 C827.5,378.3 828.2,352.1 829.1,336.1 C830.0,320.1 830.8,306.5 832.0,295.3 C833.2,284.1 834.9,275.7 836.4,269.1 C837.9,262.6 839.5,258.8 840.8,256.0 C842.1,253.2 843.1,252.2 844.3,252.5 C845.5,252.8 846.6,254.2 848.0,257.5 C849.4,260.8 850.9,265.2 852.4,272.0 C853.9,278.8 855.6,289.0 856.8,298.2 C858.0,307.4 858.9,316.6 859.7,327.3 C860.5,338.0 861.1,349.7 861.7,362.3 C862.3,374.9 863.0,387.4 863.5,403.0 C864.0,418.6 864.7,455.7 864.7,455.7 C864.7,455.7 865.4,410.7 866.4,397.2 C867.4,383.7 869.2,376.4 870.5,374.5 C871.8,372.6 873.0,378.9 874.2,385.6 C875.5,392.3 876.9,402.6 878.0,414.7 C879.1,426.8 880.2,444.4 880.9,458.4 C881.6,472.3 881.7,486.1 882.4,498.4 C883.1,510.7 885.1,532.0 885.1,532.0 C885.1,532.0 887.0,526.7 888.0,518.5 C889.0,510.3 890.3,492.0 891.4,482.7 C892.5,473.4 893.7,467.0 894.7,462.6 C895.7,458.2 896.5,456.1 897.6,456.5 C898.7,456.9 900.0,459.7 901.4,464.8 C902.8,469.9 904.4,478.6 905.9,487.2 C907.4,495.8 908.9,505.8 910.4,516.3 C911.9,526.8 913.5,536.5 914.9,549.9 C916.3,563.3 918.9,596.9 918.9,596.9 C918.9,596.9 920.6,582.0 921.6,572.3 C922.6,562.6 923.7,548.0 925.0,538.7 C926.3,529.4 927.7,521.8 929.4,516.3 C931.1,510.8 934.1,507.6 935.0,505.8" fill="none" stroke="#70400A" stroke-width="1.5" stroke-linejoin="round"/>
<path d="M210.8,505.8 C211.4,506.7 213.0,506.2 214.6,511.0 C216.2,515.8 218.5,525.8 220.4,534.3 C222.3,542.8 224.3,561.5 226.2,562.0 C228.1,562.5 230.1,546.2 232.0,537.2 C233.9,528.2 235.7,514.8 237.8,508.1 C239.9,501.4 242.3,496.5 244.5,497.0 C246.7,497.5 249.2,502.4 251.0,511.0 C252.8,519.6 254.0,533.9 255.3,548.9 C256.7,563.9 259.1,601.3 259.1,601.3 C259.1,601.3 261.1,563.2 262.6,548.9 C264.2,534.6 265.7,525.1 268.4,515.4 C271.1,505.7 275.9,496.9 278.6,490.6 C281.3,484.3 282.4,480.6 284.4,477.5 C286.4,474.4 288.6,471.8 290.8,472.0 C293.0,472.2 294.9,475.0 297.5,479.0 C300.1,483.0 303.9,495.4 306.3,495.9 C308.7,496.4 310.2,489.1 312.1,481.9 C314.0,474.7 316.0,461.5 317.9,452.8 C319.8,444.1 321.5,436.1 323.7,429.5 C325.9,422.9 328.1,417.9 330.8,413.5 C333.5,409.1 336.9,404.5 339.6,403.3 C342.3,402.1 344.4,402.8 346.8,406.2 C349.2,409.6 351.9,415.9 354.1,423.7 C356.3,431.5 358.2,442.6 359.9,452.8 C361.6,463.0 363.1,476.7 364.3,484.8 C365.5,492.9 367.2,501.7 367.2,501.7 C367.2,501.7 369.9,485.2 371.6,480.4 C373.3,475.5 375.5,472.4 377.4,472.6 C379.3,472.9 381.5,476.5 383.2,481.9 C384.9,487.3 385.8,492.8 387.6,505.2 C389.4,517.6 394.0,556.1 394.0,556.1 C394.0,556.1 397.6,536.5 399.2,525.6 C400.8,514.7 401.9,500.8 403.6,490.6 C405.3,480.4 407.7,469.8 409.4,464.4 C411.1,459.0 412.3,459.4 413.8,458.0 C415.3,456.6 416.8,458.6 418.2,456.3 C419.6,454.0 420.8,450.5 422.5,444.1 C424.2,437.7 426.4,424.0 428.4,417.9 C430.3,411.8 431.9,407.8 434.2,407.7 C436.5,407.6 439.6,417.8 442.3,417.3 C445.0,416.8 448.3,405.3 450.2,404.5 C452.1,403.7 452.7,407.9 453.7,412.7 C454.7,417.4 455.4,423.9 456.1,433.0 C456.8,442.1 458.1,467.4 458.1,467.4 C458.1,467.4 460.0,419.4 461.0,401.0 C462.0,382.6 462.7,370.4 463.9,357.3 C465.1,344.2 466.6,332.6 468.3,322.4 C470.0,312.2 472.4,302.3 474.1,296.2 C475.8,290.1 477.1,288.2 478.5,286.0 C479.9,283.8 481.1,283.0 482.5,283.0 C483.9,283.0 485.4,282.8 487.2,286.0 C488.9,289.2 491.1,294.5 493.0,302.0 C494.9,309.5 497.2,320.9 498.9,331.1 C500.6,341.3 501.8,351.6 503.2,363.2 C504.6,374.8 506.2,388.4 507.6,401.0 C509.0,413.6 509.9,427.2 511.4,438.9 C512.8,450.5 514.8,463.7 516.3,470.9 C517.8,478.1 519.2,480.0 520.7,482.0 C522.2,484.0 523.7,482.4 525.1,483.1 C526.5,483.8 527.7,487.6 529.4,486.0 C531.1,484.4 533.4,477.2 535.3,473.8 C537.1,470.4 538.8,465.7 540.5,465.7 C542.2,465.7 543.6,468.1 545.4,473.8 C547.2,479.5 549.4,492.6 551.3,500.0 C553.2,507.4 555.2,512.2 556.6,517.9 C558.0,523.5 558.6,524.4 559.6,533.9 C560.6,543.4 561.6,556.5 562.5,574.7 C563.4,592.9 565.0,643.3 565.0,643.3 C565.0,643.3 566.0,605.1 566.8,589.3 C567.6,573.5 568.6,556.8 569.7,548.5 C570.8,540.2 571.9,540.8 573.2,539.8 C574.5,538.8 576.2,543.4 577.6,542.7 C579.0,542.0 580.0,537.7 581.4,535.4 C582.8,533.1 584.3,527.0 585.8,528.7 C587.2,530.4 588.9,537.0 590.1,545.6 C591.3,554.2 592.2,561.2 593.0,580.5 C593.8,599.8 595.0,661.5 595.0,661.5 C595.0,661.5 596.5,599.8 597.4,580.5 C598.3,561.2 599.1,553.9 600.3,545.6 C601.5,537.4 603.5,532.5 604.7,531.0 C605.9,529.5 606.6,534.1 607.6,536.8 C608.6,539.5 610.5,547.0 610.5,547.0 C610.5,547.0 612.4,533.2 613.4,522.3 C614.4,511.4 615.1,493.9 616.3,481.5 C617.5,469.1 619.2,458.2 620.7,448.0 C622.2,437.8 623.7,427.8 625.1,420.4 C626.5,413.0 627.5,409.9 629.4,403.7 C631.3,397.5 634.2,387.9 636.6,383.3 C639.0,378.7 641.7,377.4 643.9,376.0 C646.1,374.6 647.5,374.5 649.7,374.6 C651.9,374.7 653.8,375.2 657.0,376.6 C660.2,378.0 664.8,380.4 668.7,382.7 C672.6,385.0 676.9,387.6 680.3,390.6 C683.7,393.6 686.4,396.9 689.1,400.8 C691.8,404.7 694.1,408.6 696.3,413.9 C698.5,419.2 700.2,426.7 702.2,432.8 C704.2,438.9 706.3,446.0 708.0,450.3 C709.7,454.6 710.5,457.1 712.3,458.4 C714.1,459.6 716.8,457.0 718.8,457.8 C720.8,458.6 722.2,458.8 724.0,463.4 C725.8,468.0 727.9,476.7 729.8,485.2 C731.7,493.7 733.9,507.6 735.6,514.3 C737.3,521.0 738.5,522.8 740.0,525.4 C741.5,528.0 742.9,526.5 744.4,529.8 C745.9,533.1 747.4,536.3 748.7,545.2 C750.0,554.1 751.0,561.4 752.2,583.0 C753.4,604.6 756.0,674.8 756.0,674.8 C756.0,674.8 757.3,637.1 758.0,623.8 C758.7,610.4 759.3,602.2 760.4,594.7 C761.5,587.2 763.2,581.4 764.7,578.7 C766.2,576.0 767.6,580.4 769.1,578.7 C770.6,577.0 772.0,574.6 773.5,568.5 C775.0,562.4 776.4,548.1 777.9,542.3 C779.4,536.5 780.9,532.1 782.2,533.6 C783.6,535.1 786.0,551.0 786.0,551.0 C786.0,551.0 788.4,527.8 789.5,516.1 C790.6,504.5 791.4,492.3 792.4,481.1 C793.4,469.9 794.1,457.1 795.3,449.1 C796.5,441.1 798.3,434.5 799.7,433.1 C801.1,431.8 802.5,433.0 803.5,441.0 C804.5,449.0 805.8,481.1 805.8,481.1 C805.8,481.1 807.7,456.8 808.7,443.8 C809.7,430.8 810.6,414.6 811.6,403.0 C812.6,391.4 813.5,380.6 814.6,373.9 C815.7,367.2 817.0,363.4 818.1,362.9 C819.2,362.4 820.1,365.8 821.0,371.0 C821.9,376.2 822.7,387.0 823.3,394.3 C823.9,401.6 824.7,414.7 824.7,414.7 C824.7,414.7 826.1,404.5 826.8,391.4 C827.5,378.3 828.2,352.1 829.1,336.1 C830.0,320.1 830.8,306.5 832.0,295.3 C833.2,284.1 834.9,275.7 836.4,269.1 C837.9,262.6 839.5,258.8 840.8,256.0 C842.1,253.2 843.1,252.2 844.3,252.5 C845.5,252.8 846.6,254.2 848.0,257.5 C849.4,260.8 850.9,265.2 852.4,272.0 C853.9,278.8 855.6,289.0 856.8,298.2 C858.0,307.4 858.9,316.6 859.7,327.3 C860.5,338.0 861.1,349.7 861.7,362.3 C862.3,374.9 863.0,387.4 863.5,403.0 C864.0,418.6 864.7,455.7 864.7,455.7 C864.7,455.7 865.4,410.7 866.4,397.2 C867.4,383.7 869.2,376.4 870.5,374.5 C871.8,372.6 873.0,378.9 874.2,385.6 C875.5,392.3 876.9,402.6 878.0,414.7 C879.1,426.8 880.2,444.4 880.9,458.4 C881.6,472.3 881.7,486.1 882.4,498.4 C883.1,510.7 885.1,532.0 885.1,532.0 C885.1,532.0 887.0,526.7 888.0,518.5 C889.0,510.3 890.3,492.0 891.4,482.7 C892.5,473.4 893.7,467.0 894.7,462.6 C895.7,458.2 896.5,456.1 897.6,456.5 C898.7,456.9 900.0,459.7 901.4,464.8 C902.8,469.9 904.4,478.6 905.9,487.2 C907.4,495.8 908.9,505.8 910.4,516.3 C911.9,526.8 913.5,536.5 914.9,549.9 C916.3,563.3 918.9,596.9 918.9,596.9 C918.9,596.9 920.6,582.0 921.6,572.3 C922.6,562.6 923.7,548.0 925.0,538.7 C926.3,529.4 927.7,521.8 929.4,516.3 C931.1,510.8 934.1,507.6 935.0,505.8" fill="none" stroke="#0A7A00" stroke-width="0.7" stroke-linejoin="round" opacity="0.5"/>
<path transform="translate(204,241)" d="M0,0.3 L-4,7.4 L-2.8,8 L-2.8,13.3 Q0,15.2 2.8,13.3 L2.8,8 L4,7.4 Z" fill="#F4F4F4" stroke="#2C8CFF" stroke-width="1.15" stroke-linejoin="round"/>
<path transform="translate(204,674.5) rotate(180)" d="M0,0.3 L-4,7.4 L-2.8,8 L-2.8,13.3 Q0,15.2 2.8,13.3 L2.8,8 L4,7.4 Z" fill="#F4F4F4" stroke="#2C8CFF" stroke-width="1.15" stroke-linejoin="round"/>
<path transform="translate(204.5,675) rotate(-90)" d="M0,0.3 L-4,7.4 L-2.8,8 L-2.8,13.3 Q0,15.2 2.8,13.3 L2.8,8 L4,7.4 Z" fill="#F4F4F4" stroke="#2C8CFF" stroke-width="1.15" stroke-linejoin="round"/>
<path transform="translate(942.3,675) rotate(90)" d="M0,0.3 L-4,7.4 L-2.8,8 L-2.8,13.3 Q0,15.2 2.8,13.3 L2.8,8 L4,7.4 Z" fill="#F4F4F4" stroke="#2C8CFF" stroke-width="1.15" stroke-linejoin="round"/>
<text x="539" y="230" text-anchor="middle" font-size="16" fill="#111">po_rcs_cart_phi_45.00</text>
<text x="572.5" y="714" text-anchor="middle" font-size="16" fill="#111">theta</text>
<text transform="translate(142.5,437) rotate(-90)" text-anchor="middle" font-size="16" fill="#111">rcs_theta_db</text></svg>

<div class="a" style="left:37px;top:114px;width:119px;height:57px;border:1px solid #555;border-bottom-color:#333;border-right-color:#333;background:#fff;box-shadow:2px 2px 2px rgba(0,0,0,0.45)"></div>
<svg class="a" style="left:0;top:0;font-family:'Liberation Sans'" width="200" height="200">
<rect x="41" y="119" width="12" height="12" fill="#fff"/><path d="M41.5,131 V119.5 H53" fill="none" stroke="#8A8A8A" stroke-width="1"/><path d="M42.5,130 V120.5 H52" fill="none" stroke="#6A6A6A" stroke-width="1"/><path d="M42,130.5 H52.5 V120" fill="none" stroke="#E2E2E2" stroke-width="1"/><path d="M44.3,124.6 L46.8,127.6 L51,122.2" fill="none" stroke="#000" stroke-width="2.1"/><rect x="57" y="124" width="20" height="2" fill="#FF0000"/><text transform="translate(82,128.7) scale(0.95,1)" font-size="12" fill="#111">rcs_theta_db</text><rect x="41" y="136" width="12" height="12" fill="#fff"/><path d="M41.5,148 V136.5 H53" fill="none" stroke="#8A8A8A" stroke-width="1"/><path d="M42.5,147 V137.5 H52" fill="none" stroke="#6A6A6A" stroke-width="1"/><path d="M42,147.5 H52.5 V137" fill="none" stroke="#E2E2E2" stroke-width="1"/><path d="M44.3,141.6 L46.8,144.6 L51,139.2" fill="none" stroke="#000" stroke-width="2.1"/><rect x="57" y="141" width="20" height="2" fill="#7272BC"/><text transform="translate(82,145.7) scale(0.95,1)" font-size="12" fill="#111">rcs_phi_db</text><rect x="41" y="153" width="12" height="12" fill="#fff"/><path d="M41.5,165 V153.5 H53" fill="none" stroke="#8A8A8A" stroke-width="1"/><path d="M42.5,164 V154.5 H52" fill="none" stroke="#6A6A6A" stroke-width="1"/><path d="M42,164.5 H52.5 V154" fill="none" stroke="#E2E2E2" stroke-width="1"/><path d="M44.3,158.6 L46.8,161.6 L51,156.2" fill="none" stroke="#000" stroke-width="2.1"/><rect x="57" y="158" width="20" height="2" fill="#6CB46C"/><text transform="translate(82,162.7) scale(0.95,1)" font-size="12" fill="#111">rcs_total_db</text></svg>
<svg class="a" style="left:0;top:0;font-family:'Liberation Sans'" width="1058" height="893">
<rect x="37" y="820" width="1006" height="35" fill="#F0F0F0"/>
<rect x="37" y="820" width="1006" height="1" fill="#D8D8D8"/><rect x="37" y="836" width="1006" height="1" fill="#D8D8D8"/>
<text transform="translate(108.5,833) scale(0.94,1)" text-anchor="middle" font-size="12.5" fill="#111" stroke="#111" stroke-width="0.25">X-Cursor</text>
<text transform="translate(108.5,850.6) scale(0.9,1)" text-anchor="middle" font-size="12.5" fill="#000" stroke="#000" stroke-width="0.2">-2.437e+02</text>
<rect x="179" y="838" width="1" height="16" fill="#D0D0D0"/>
<text transform="translate(251.4,833) scale(0.94,1)" text-anchor="middle" font-size="12.5" fill="#111" stroke="#111" stroke-width="0.25">Y-Cursor</text>
<text transform="translate(251.4,850.6) scale(0.9,1)" text-anchor="middle" font-size="12.5" fill="#000" stroke="#000" stroke-width="0.2">-1.204e+01</text>
<rect x="322" y="838" width="1" height="16" fill="#D0D0D0"/>
<text transform="translate(394.2,833) scale(0.94,1)" text-anchor="middle" font-size="12.5" fill="#111" stroke="#111" stroke-width="0.25">V-Caliper</text>
<rect x="465" y="838" width="1" height="16" fill="#D0D0D0"/>
<text transform="translate(537.2,833) scale(0.94,1)" text-anchor="middle" font-size="12.5" fill="#111" stroke="#111" stroke-width="0.25">H-Cal (dX)</text>
<rect x="608" y="838" width="1" height="16" fill="#D0D0D0"/>
<text transform="translate(680.1,833) scale(0.94,1)" text-anchor="middle" font-size="12.5" fill="#111" stroke="#111" stroke-width="0.25">H-Cal (1/dX)</text>
<rect x="751" y="838" width="1" height="16" fill="#D0D0D0"/>
<text transform="translate(823.0,833) scale(0.94,1)" text-anchor="middle" font-size="12.5" fill="#111" stroke="#111" stroke-width="0.25">Horz-D</text>
<rect x="894" y="838" width="1" height="16" fill="#D0D0D0"/>
<text transform="translate(965.9,833) scale(0.94,1)" text-anchor="middle" font-size="12.5" fill="#111" stroke="#111" stroke-width="0.25">Vert-D</text>
<rect x="1037" y="838" width="1" height="16" fill="#D0D0D0"/>
</svg>
<svg class="a" style="left:1039px;top:874px" width="12" height="12"><g fill="#B8B8B8"><rect x="7" y="1" width="2" height="2"/><rect x="4" y="4" width="2" height="2"/><rect x="7" y="4" width="2" height="2"/><rect x="1" y="7" width="2" height="2"/><rect x="4" y="7" width="2" height="2"/><rect x="7" y="7" width="2" height="2"/></g></svg>
</body></html>
